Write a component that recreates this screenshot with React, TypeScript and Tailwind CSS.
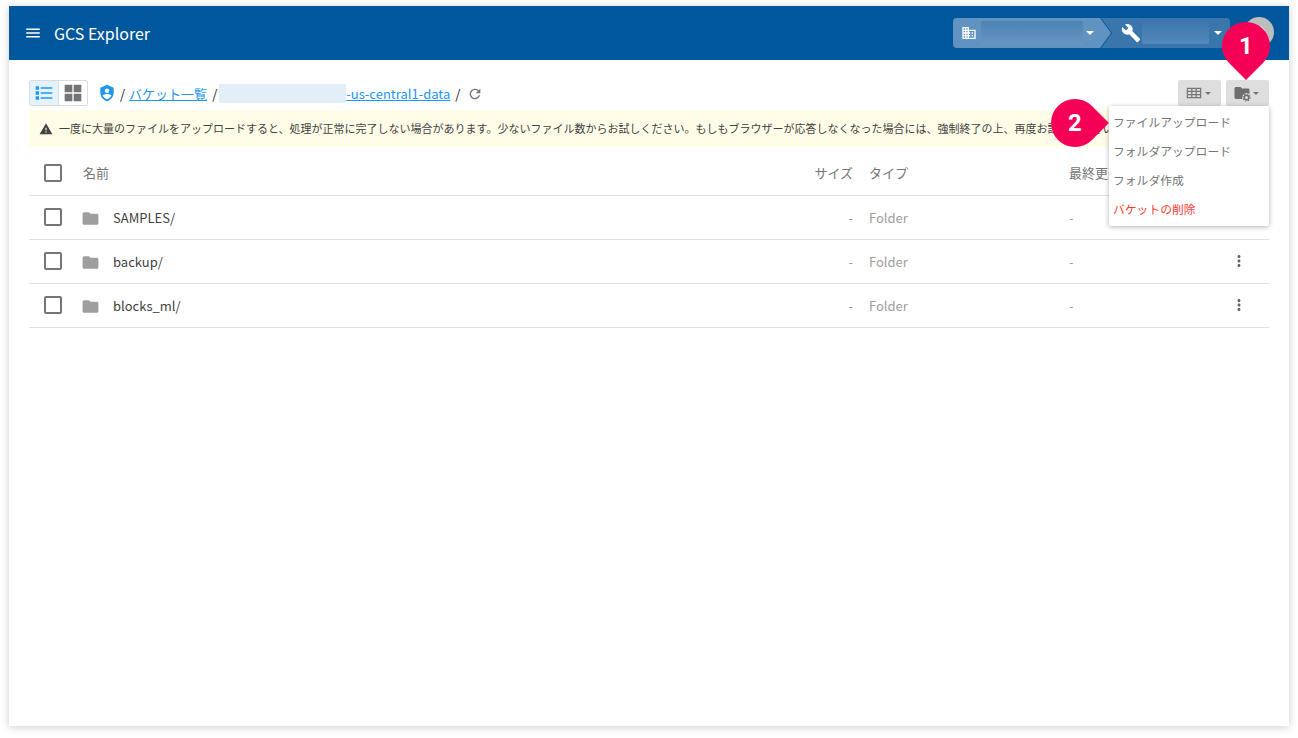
import React from "react";

const Caret = ({ className }: { className: string }) => (
  <span className={`inline-block w-0 h-0 border-x-[3px] border-x-transparent border-t-[3px] ${className}`} />
);

const Folder = () => (
  <svg viewBox="0 0 24 24" fill="#9e9e9e" className="w-[19px] h-[19px] shrink-0 -ml-[2px] mt-[1px]">
    <path d="M10 4H4c-1.1 0-2 .9-2 2v12c0 1.1.9 2 2 2h16c1.1 0 2-.9 2-2V8c0-1.1-.9-2-2-2h-8l-2-2z" />
  </svg>
);

const Kebab = () => (
  <svg viewBox="0 0 24 24" fill="#616161" className="w-[18px] h-[18px] mb-[2px]">
    <path d="M12 8c1.1 0 2-.9 2-2s-.9-2-2-2-2 .9-2 2 .9 2 2 2zm0 2c-1.1 0-2 .9-2 2s.9 2 2 2 2-.9 2-2-.9-2-2-2zm0 6c-1.1 0-2 .9-2 2s.9 2 2 2 2-.9 2-2-.9-2-2-2z" />
  </svg>
);

const Check = () => <span className="block w-[18px] h-[18px] rounded-[2px] border-2 border-[#757575] ml-[15px]" />;

function Row({ name, kebab }: { name: string; kebab: boolean }) {
  return (
    <div className="flex items-center h-[44px] border-b border-[#e0e0e0] text-[13px]">
      <div className="w-[54px] shrink-0 mb-[2px]"><Check /></div>
      <div className="flex-1 flex items-center gap-[13px] text-[#424242]">
        <Folder />
        <span>{name}</span>
      </div>
      <div className="w-[60px] mr-[16px] text-right text-[#9e9e9e]">-</div>
      <div className="w-[200px] text-[#9e9e9e]">Folder</div>
      <div className="w-[160px] text-[#9e9e9e]">-</div>
      <div className="w-[20px] flex justify-center">{kebab && <Kebab />}</div>
      <div className="w-[20px]" />
    </div>
  );
}

const Pin = ({ n, className, tail }: { n: string; className: string; tail: string }) => (
  <div className={`absolute w-[48px] h-[48px] ${className}`}>
    <div className={`absolute inset-0 rotate-45 bg-[#f50057] rounded-full ${tail}`} />
    <span className="absolute inset-0 flex items-center justify-center text-white text-[24px] font-bold leading-none font-['Roboto',sans-serif]">{n}</span>
  </div>
);

export default function App() {
  return (
    <div className="relative w-[1298px] h-[738px] overflow-hidden bg-white pt-[6px] px-[9px] font-['Noto_Sans_CJK_JP','Noto_Sans',sans-serif]">
      <div className="h-[720px] bg-white shadow-[0_1px_8px_rgba(0,0,0,0.2)]">
        <header className="h-[54px] bg-[#01579b] flex items-center text-white">
          <svg viewBox="0 0 24 24" fill="#fff" className="w-[18px] h-[18px] ml-[15px]">
            <path d="M3 18h18v-2H3v2zm0-5h18v-2H3v2zm0-7v2h18V6H3z" />
          </svg>
          <span className="ml-[12px] text-[16px] leading-none -mt-[1px]">GCS Explorer</span>
          <div className="ml-auto flex items-center mr-[15px]">
            <div className="flex h-[30px] w-[277px] rounded-[4px] overflow-hidden bg-[#3a75ab]">
              <div className="w-[159px] shrink-0 relative bg-[#01579b] [clip-path:polygon(0_0,148px_0,159px_50%,148px_100%,0_100%)]">
                <div className="absolute inset-0 flex items-center bg-[#6093bf] pl-[8px] [clip-path:polygon(0_0,147px_0,158px_50%,147px_100%,0_100%)]">
                  <svg viewBox="0 0 24 24" fill="#fff" className="w-[16px] h-[16px] shrink-0">
                    <path d="M12 7V3H2v18h20V7H12zM6 19H4v-2h2v2zm0-4H4v-2h2v2zm0-4H4V9h2v2zm0-4H4V5h2v2zm4 12H8v-2h2v2zm0-4H8v-2h2v2zm0-4H8V9h2v2zm0-4H8V5h2v2zm10 12h-8v-2h2v-2h-2v-2h2v-2h-2V9h8v10zm-2-8h-2v2h2v-2zm0 4h-2v2h2v-2z" />
                  </svg>
                  <div className="ml-[4px] w-[102px] h-[24px] bg-linear-to-b from-[#4c83b6] to-[#6896c0]" />
                  <Caret className="ml-[3px] border-x-[4px] border-t-[4px] border-t-white" />
                </div>
              </div>
              <div className="flex-1 flex items-center pl-[9px]">
                <svg viewBox="0 0 24 24" fill="#fff" className="w-[20px] h-[20px] shrink-0">
                  <path d="M22.7 19l-9.1-9.1c.9-2.3.4-5-1.5-6.9-2-2-5-2.4-7.4-1.3L9 6 6 9 1.6 4.7C.4 7.1.9 10.1 2.9 12.1c1.9 1.9 4.6 2.4 6.9 1.5l9.1 9.1c.4.4 1 .4 1.4 0l2.3-2.3c.5-.4.5-1.1.1-1.4z" />
                </svg>
                <div className="ml-[1px] w-[67px] h-[22px] bg-linear-to-b from-[#3f78ae] to-[#5288b9]" />
                <Caret className="ml-[5px] border-x-[4px] border-t-[4px] border-t-white" />
              </div>
            </div>
            <div className="ml-[14px] -mt-[2px] w-[30px] h-[30px] rounded-full bg-[#bdbdbd] flex items-center justify-center">
              <div className="w-[12px] h-[12px] rounded-full bg-[#e0e0e0]" />
            </div>
          </div>
        </header>

        <main className="px-[20px]">
          <div className="flex items-center h-[26px] mt-[20px] text-[13px]">
            <div className="flex h-[26px] w-[59px] rounded-[2px] border border-[#dcdcdc]">
              <div className="w-[29px] bg-[#e3f2fd] flex items-center justify-center border-r border-[#dcdcdc]">
                <svg viewBox="0 0 24 24" fill="#2196f3" className="w-[20px] h-[20px]">
                  <path d="M2 4h4v4H2zM8 5h14v2H8zM2 10h4v4H2zM8 11h14v2H8zM2 16h4v4H2zM8 17h14v2H8z" />
                </svg>
              </div>
              <div className="flex-1 flex items-center justify-center">
                <svg viewBox="0 0 24 24" fill="#757575" className="w-[20px] h-[20px]">
                  <path d="M2 2h9.200v9.200H2zM12.800 2H22v9.200h-9.200zM2 12.800h9.200V22H2zM12.800 12.800H22V22h-9.200z" />
                </svg>
              </div>
            </div>
            <svg viewBox="0 0 24 24" fill="#2196f3" className="ml-[10px] w-[18px] h-[18px] -mt-[1px]">
              <path d="M12 1 3 5v6c0 5.550 3.840 10.740 9 12 5.160-1.260 9-6.450 9-12V5l-9-4zm0 5a3 3 0 1 1 0 6 3 3 0 0 1 0-6zm0 14.200c-2.500-.8-4.600-2.600-5.800-5 1.700-1.300 3.700-2 5.800-2s4.100.7 5.800 2c-1.200 2.400-3.300 4.200-5.800 5z" />
            </svg>
            <div className="flex items-center pt-[2px]">
              <span className="ml-[4px] text-[#212121]">/</span>
              <a className="ml-[4px] text-[#2196f3] underline">バケット一覧</a>
              <span className="ml-[5px] text-[#212121]">/</span>
              <a className="ml-[2px] flex text-[#2196f3] underline">
                <span className="w-[127px] h-[19px] bg-[#e3eff6]" />-us-central1-data
              </a>
              <span className="ml-[5px] text-[#212121]">/</span>
              <svg viewBox="0 0 24 24" fill="#757575" className="ml-[7px] w-[16px] h-[16px]">
                <path d="M17.650 6.350A7.958 7.958 0 0 0 12 4c-4.420 0-7.990 3.580-7.990 8s3.570 8 7.990 8c3.730 0 6.840-2.550 7.730-6h-2.080A5.990 5.990 0 0 1 12 18c-3.310 0-6-2.690-6-6s2.690-6 6-6c1.660 0 3.140.69 4.220 1.780L13 11h7V4l-2.350 2.350z" />
              </svg>
            </div>
            <div className="ml-auto flex gap-[5px]">
              <div className="w-[43px] h-[26px] rounded-[2px] bg-[#dedede] flex items-center justify-center gap-[3px] pr-[3px]">
                <svg viewBox="0 0 24 24" fill="none" stroke="#757575" strokeWidth="1.800" className="w-[16px] h-[16px]">
                  <path d="M2 5h20v14H2zM2 9.700h20M2 14.300h20M8.700 5v14M15.300 5v14" />
                </svg>
                <Caret className="border-t-[#757575]" />
              </div>
              <div className="w-[43px] h-[26px] rounded-[2px] bg-[#dedede] flex items-center justify-center gap-[2px] pr-[4px]">
                <svg viewBox="0 0 24 24" fill="#6e6e6e" className="w-[18px] h-[18px]">
                  <path d="M10 4H4c-1.100 0-2 .9-2 2v12c0 1.100.9 2 2 2h8.500a6 6 0 0 1 9.500-6.500V8c0-1.100-.9-2-2-2h-8l-2-2z" />
                  <circle cx="18" cy="18" r="3" fill="none" stroke="#6e6e6e" strokeWidth="2" />
                  <circle cx="18" cy="18" r="4.700" fill="none" stroke="#6e6e6e" strokeWidth="1.600" strokeDasharray="1.800 1.900" />
                </svg>
                <Caret className="border-t-[#757575]" />
              </div>
            </div>
          </div>

          <div className="mt-[4px] h-[37px] bg-[#fffde7] flex items-center pl-[10px] text-[11px] text-[#424242] whitespace-nowrap overflow-hidden">
            <svg viewBox="0 0 24 24" fill="#424242" className="w-[14px] h-[14px] shrink-0 mr-[6px]">
              <path d="M1 21h22L12 2 1 21zm12-3h-2v-2h2v2zm0-4h-2v-4h2v4z" />
            </svg>
            一度に大量のファイルをアップロードすると、処理が正常に完了しない場合があります。少ないファイル数からお試しください。もしもブラウザーが応答しなくなった場合には、強制終了の上、再度お試しください。
          </div>

          <div className="mt-[4px] flex items-center h-[45px] border-b border-[#e0e0e0] text-[13px] text-[#757575]">
            <div className="w-[54px] shrink-0"><Check /></div>
            <div className="flex-1">名前</div>
            <div className="w-[60px] mr-[16px] text-right whitespace-nowrap">サイズ</div>
            <div className="w-[200px]">タイプ</div>
            <div className="w-[200px]">最終更新</div>
          </div>
          <Row name="SAMPLES/" kebab={false} />
          <Row name="backup/" kebab />
          <Row name="blocks_ml/" kebab />
        </main>
      </div>

      <div className="absolute left-[1109px] top-[106px] w-[160px] h-[120px] bg-white rounded-[2px] shadow-[0_1px_5px_rgba(0,0,0,0.3)] text-[11.8px] text-[#757575] pl-[4px] pt-[1px]">
        <div className="h-[29px] flex items-center">ファイルアップロード</div>
        <div className="h-[29px] flex items-center">フォルダアップロード</div>
        <div className="h-[29px] flex items-center">フォルダ作成</div>
        <div className="h-[29px] flex items-center text-[#ff3b30]">バケットの削除</div>
      </div>

      <Pin n="1" className="left-[1222px] top-[22px]" tail="rounded-br-none" />
      <Pin n="2" className="left-[1051px] top-[99px]" tail="rounded-tr-none" />
    </div>
  );
}
